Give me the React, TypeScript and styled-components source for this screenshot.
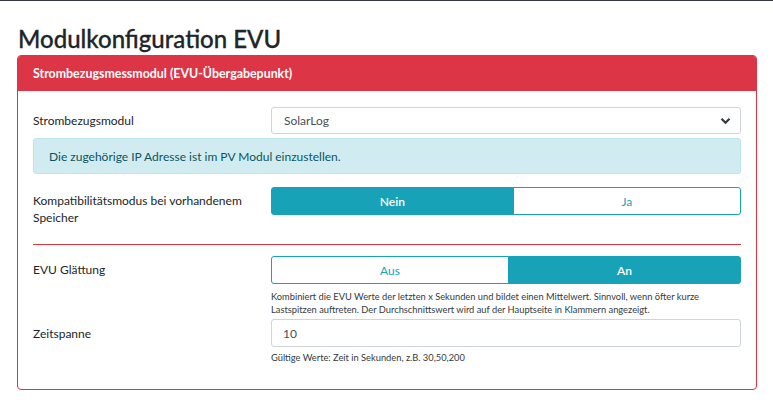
import React from "react";
import styled, { createGlobalStyle, css } from "styled-components";

const Global = createGlobalStyle`
  html, body { margin: 0; padding: 0; background: #fff; }
  body { font-family: Lato, "Open Sans", sans-serif; color: #212529; }
  * { box-sizing: border-box; }
`;

const TopBar = styled.div`
  height: 1px;
  background: #343a40;
`;

const Page = styled.div`
  padding: 0 16px 0 17px;
`;

const Title = styled.h1`
  margin: 21px 0 0 1px;
  font-size: 24px;
  font-weight: 500;
  line-height: 33px;
  color: #212529;
  -webkit-text-stroke: 0.3px #212529;
`;

const Card = styled.div`
  border: 1px solid #dc3545;
  border-radius: 4px;
  overflow: hidden;
  height: 335px;
`;

const CardHeader = styled.div`
  background: #dc3545;
  color: #fff;
  font-weight: 700;
  font-size: 12.4px;
  height: 35px;
  display: flex;
  align-items: center;
  padding-left: 15px;
`;

const CardBody = styled.div`
  padding: 16px 15px 0 15px;
  display: flex;
  flex-direction: column;
`;

const Row = styled.div<{ $mt?: number }>`
  display: grid;
  grid-template-columns: 238px 1fr;
  margin-top: ${(p) => p.$mt ?? 0}px;
`;

const Label = styled.div<{ $pt: number }>`
  font-size: 12px;
  line-height: 17px;
  color: #212529;
  padding-top: ${(p) => p.$pt}px;
`;

const Control = styled.div`
  display: flex;
  flex-direction: column;
`;

const SelectBox = styled.div`
  height: 27px;
  border: 1px solid #ced4da;
  border-radius: 3px;
  display: flex;
  align-items: center;
  justify-content: space-between;
  padding: 0 9px 0 12px;
  font-size: 12px;
  color: #495057;
`;

const Alert = styled.div`
  margin-top: 4px;
  height: 36px;
  background: #d1ecf1;
  border: 1px solid #bee5eb;
  border-radius: 3px;
  color: #0c5460;
  font-size: 12px;
  display: flex;
  align-items: center;
  padding-left: 15px;
`;

const BtnGroup = styled.div`
  display: flex;
  height: 28px;
`;

const Btn = styled.div<{ $active?: boolean; $first?: boolean }>`
  flex: 1 1 auto;
  display: flex;
  align-items: center;
  justify-content: center;
  font-size: 12px;
  border: 1px solid #17a2b8;
  ${(p) =>
    p.$first
      ? css`
          border-radius: 3px 0 0 3px;
        `
      : css`
          border-radius: 0 3px 3px 0;
          margin-left: -1px;
        `}
  ${(p) =>
    p.$active
      ? css`
          background: #17a2b8;
          color: #fff;
          font-weight: 600;
        `
      : css`
          background: #fff;
          color: #17a2b8;
        `}
`;

const Divider = styled.hr`
  margin: 18px 0 11px 0;
  border: 0;
  border-top: 1px solid #dc3545;
  height: 0;
`;

const Help = styled.div<{ $mt: number }>`
  font-size: 9.3px;
  line-height: 13px;
  color: #343a40;
  margin-top: ${(p) => p.$mt}px;
`;

const InputBox = styled.div`
  height: 28px;
  border: 1px solid #ced4da;
  border-radius: 3px;
  display: flex;
  align-items: center;
  padding-left: 11px;
  font-size: 12px;
  color: #495057;
`;

const Chevron = () => (
  <svg width="11" height="8" viewBox="0 0 11 8">
    <path d="M1.5 1.8 L5.5 5.8 L9.5 1.8" fill="none" stroke="#343a40" strokeWidth="2.2" />
  </svg>
);

export default function App() {
  return (
    <>
      <Global />
      <TopBar />
      <Page>
        <Title>Modulkonfiguration EVU</Title>
        <Card>
          <CardHeader>Strombezugsmessmodul (EVU-Übergabepunkt)</CardHeader>
          <CardBody>
            <Row>
              <Label $pt={5}>Strombezugsmodul</Label>
              <SelectBox>
                <span>SolarLog</span>
                <Chevron />
              </SelectBox>
            </Row>
            <Alert>Die zugehörige IP Adresse ist im PV Modul einzustellen.</Alert>
            <Row $mt={13}>
              <Label $pt={5}>Kompatibilitätsmodus bei vorhandenem Speicher</Label>
              <Control>
                <BtnGroup>
                  <Btn $first $active>Nein</Btn>
                  <Btn>Ja</Btn>
                </BtnGroup>
              </Control>
            </Row>
            <Divider />
            <Row>
              <Label $pt={5}>EVU Glättung</Label>
              <Control>
                <BtnGroup>
                  <Btn $first>Aus</Btn>
                  <Btn $active>An</Btn>
                </BtnGroup>
                <Help $mt={6}>
                  Kombiniert die EVU Werte der letzten x Sekunden und bildet einen Mittelwert. Sinnvoll, wenn öfter kurze
                  Lastspitzen auftreten. Der Durchschnittswert wird auf der Hauptseite in Klammern angezeigt.
                </Help>
              </Control>
            </Row>
            <Row $mt={3}>
              <Label $pt={6}>Zeitspanne</Label>
              <Control>
                <InputBox>10</InputBox>
                <Help $mt={4}>Gültige Werte: Zeit in Sekunden, z.B. 30,50,200</Help>
              </Control>
            </Row>
          </CardBody>
        </Card>
      </Page>
    </>
  );
}
